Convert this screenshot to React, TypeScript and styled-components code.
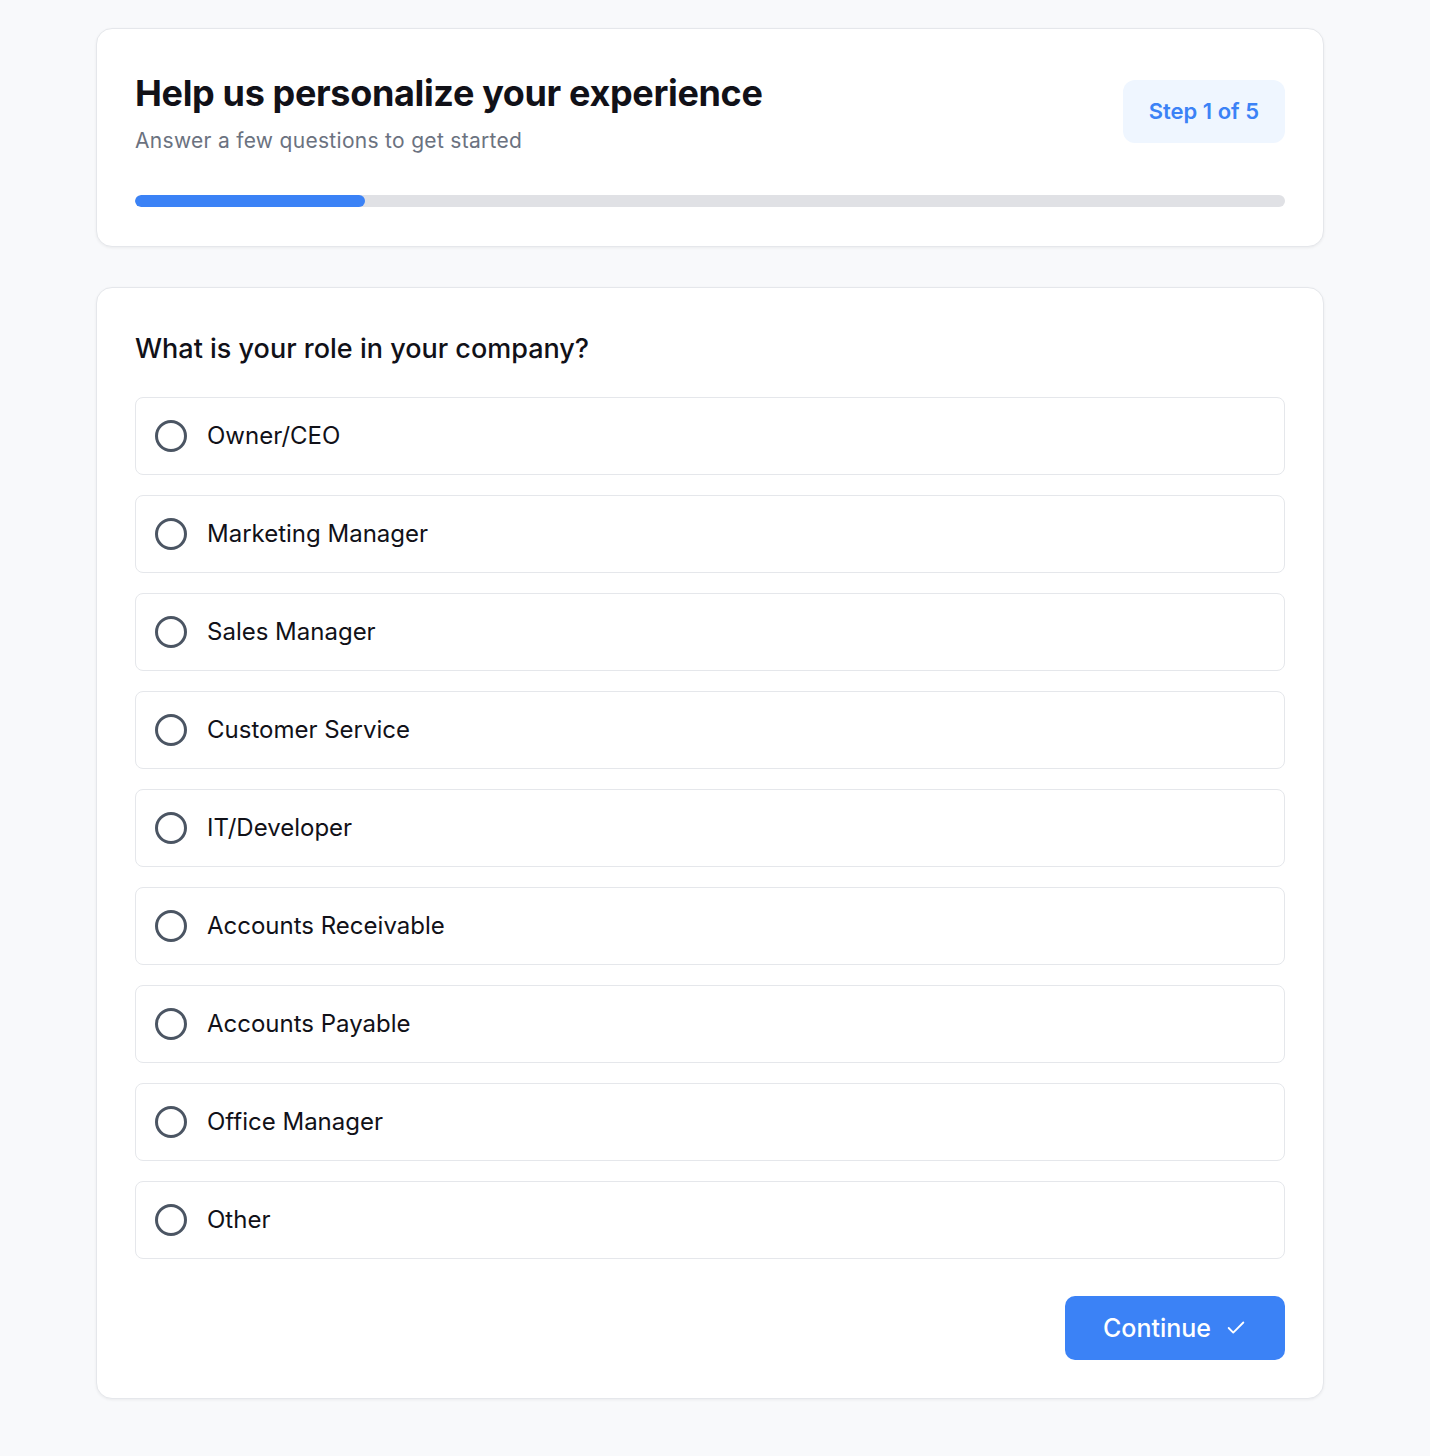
import React, { useState } from "react";
import styled, { createGlobalStyle } from "styled-components";

const GlobalStyle = createGlobalStyle`
  * {
    box-sizing: border-box;
  }
  body {
    margin: 0;
    background: #f8f9fb;
    font-family: Inter, "Noto Sans", "Liberation Sans", sans-serif;
    color: #111827;
  }
`;

const roles = [
  "Owner/CEO",
  "Marketing Manager",
  "Sales Manager",
  "Customer Service",
  "IT/Developer",
  "Accounts Receivable",
  "Accounts Payable",
  "Office Manager",
  "Other",
];

const App: React.FC = () => {
  const [selected, setSelected] = useState<string | null>(null);
  const step = 1;
  const total = 5;

  return (
    <>
      <GlobalStyle />
      <Page>
        <Card>
          <Header>
            <div>
              <Title>Help us personalize your experience</Title>
              <Subtitle>Answer a few questions to get started</Subtitle>
            </div>
            <StepBadge>
              Step {step} of {total}
            </StepBadge>
          </Header>
          <Track>
            <Fill style={{ width: `${(step / total) * 100}%` }} />
          </Track>
        </Card>

        <Card $top={41}>
          <Question>What is your role in your company?</Question>
          <Options>
            {roles.map((role) => (
              <Option
                key={role}
                $active={selected === role}
                onClick={() => setSelected(role)}
              >
                <Radio $active={selected === role} />
                <span>{role}</span>
              </Option>
            ))}
          </Options>
          <Footer>
            <Button>
              Continue
              <svg
                width="22"
                height="22"
                viewBox="0 0 24 24"
                fill="none"
                stroke="currentColor"
                strokeWidth="2"
                strokeLinecap="round"
                strokeLinejoin="round"
              >
                <path d="M20 6 9 17l-5-5" />
              </svg>
            </Button>
          </Footer>
        </Card>
      </Page>
    </>
  );
};
export default App;

const Page = styled.main`
  width: 1228px;
  margin-left: 96px;
  padding: 28px 0 56px;
  display: flex;
  flex-direction: column;
  gap: 40px;
`;

const Card = styled.section<{ $top?: number }>`
  background: #ffffff;
  border: 1px solid #e5e7eb;
  border-radius: 16px;
  box-shadow: 0 1px 3px rgba(0, 0, 0, 0.06);
  padding: ${(p) => p.$top ?? 38}px 38px 38px;
`;

const Header = styled.div`
  display: flex;
  justify-content: space-between;
  align-items: center;
  margin-bottom: 40px;
  margin-top: 4px;
`;

const Title = styled.h1`
  margin: 0;
  font-size: 36px;
  line-height: 44px;
  font-weight: 700;
  letter-spacing: -0.35px;
  color: #111118;
`;

const Subtitle = styled.p`
  margin: 12px 0 0;
  font-size: 21px;
  line-height: 28px;
  letter-spacing: 0.3px;
  color: #6b7280;
`;

const StepBadge = styled.div`
  background: #eff6ff;
  color: #3b82f6;
  font-size: 22px;
  font-weight: 600;
  padding: 17px 26px;
  margin-bottom: 4px;
  border-radius: 12px;
  line-height: 29px;
`;

const Track = styled.div`
  height: 12px;
  border-radius: 6px;
  background: #e0e1e5;
  overflow: hidden;
  margin-bottom: 1px;
`;

const Fill = styled.div`
  height: 100%;
  border-radius: 6px;
  background: #3b82f6;
`;

const Question = styled.h2`
  margin: 0 0 28px;
  font-size: 27px;
  line-height: 40px;
  font-weight: 500;
  color: #111118;
`;

const Options = styled.div`
  display: flex;
  flex-direction: column;
  gap: 20px;
`;

const Option = styled.button<{ $active: boolean }>`
  display: flex;
  align-items: center;
  gap: 20px;
  width: 100%;
  padding: 22px 19px;
  background: ${(p) => (p.$active ? "#eff6ff" : "#ffffff")};
  border: 1px solid ${(p) => (p.$active ? "#3b82f6" : "#e5e7eb")};
  border-radius: 8px;
  font-family: inherit;
  font-size: 24px;
  line-height: 32px;
  color: #111118;
  text-align: left;
  cursor: pointer;
`;

const Radio = styled.span<{ $active: boolean }>`
  width: 32px;
  height: 32px;
  flex-shrink: 0;
  border-radius: 50%;
  border: 3px solid ${(p) => (p.$active ? "#3b82f6" : "#4b5563")};
  box-shadow: ${(p) => (p.$active ? "inset 0 0 0 5px #fff" : "none")};
  background: ${(p) => (p.$active ? "#3b82f6" : "transparent")};
`;

const Footer = styled.div`
  display: flex;
  justify-content: flex-end;
  margin-top: 37px;
`;

const Button = styled.button`
  display: inline-flex;
  align-items: center;
  gap: 14px;
  height: 64px;
  padding: 0 38px 0 38px;
  background: #3b82f6;
  color: #ffffff;
  border: none;
  border-radius: 10px;
  font-family: inherit;
  font-size: 25px;
  font-weight: 500;
  cursor: pointer;
`;
